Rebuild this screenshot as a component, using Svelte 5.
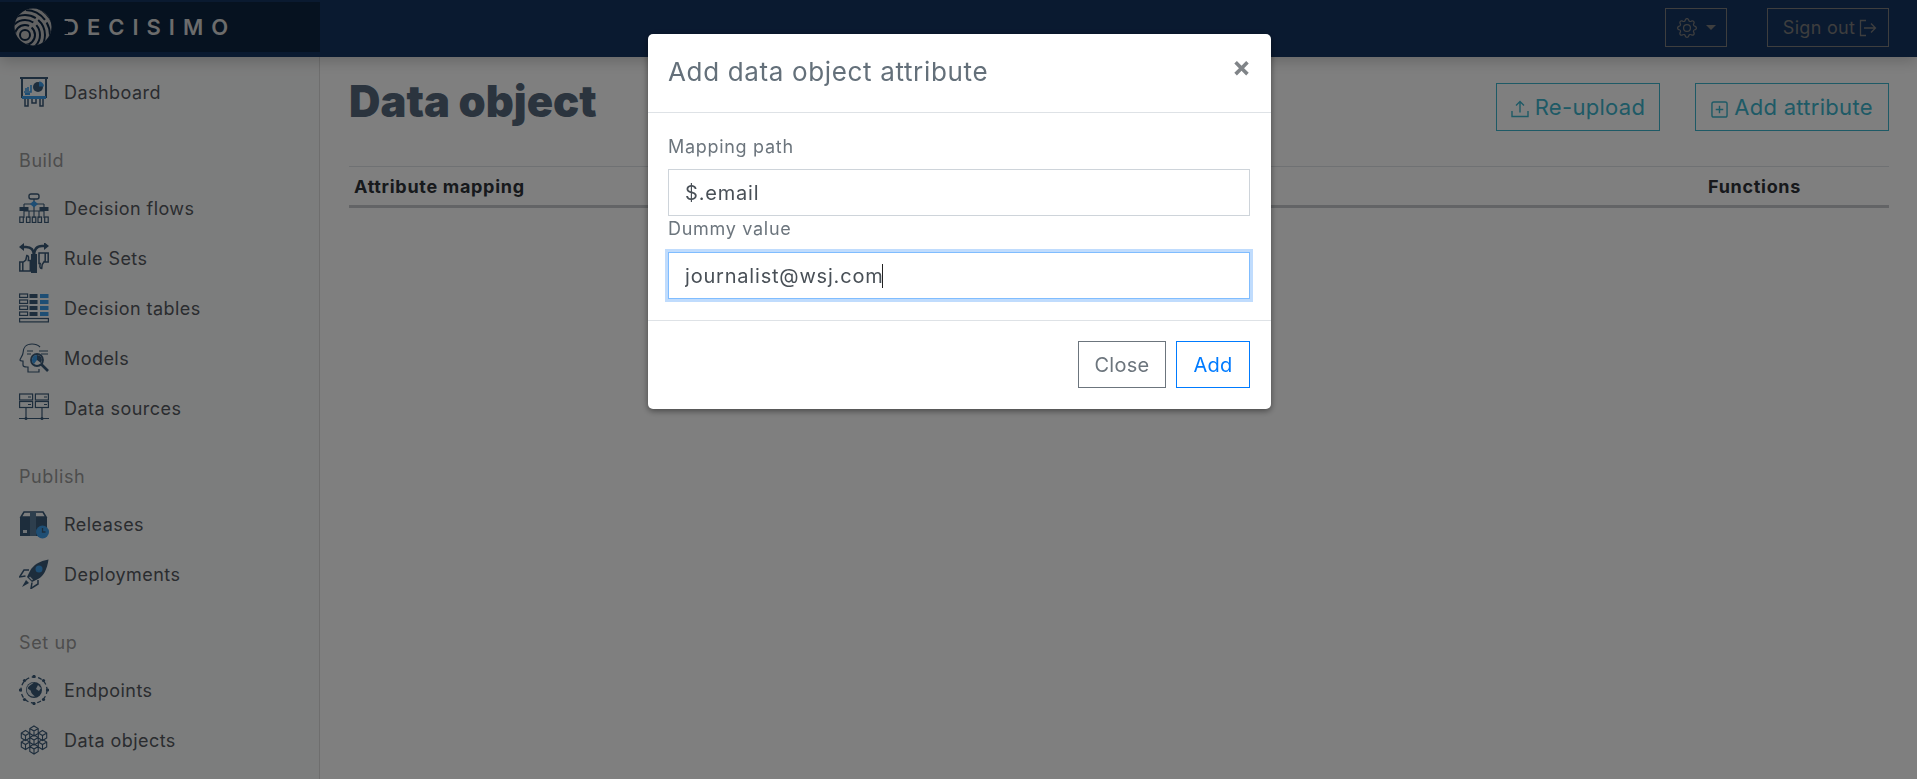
<script>
	const ink = "#3a5a78";
	const blue = "#3c9ce8";

	// one small isometric cube, used for the data objects cluster
	const cube = (x, y) =>
		`M${x} ${y - 5}l4.200 2.500v5l-4.200 2.500-4.200-2.500v-5zM${x - 4.200} ${y - 2.500}l4.200 2.500 4.200-2.500M${x} ${y}v5`;
	const cubes = [
		[15, 6],
		[15, 15],
		[15, 24],
		[6.500, 10.500],
		[23.500, 10.500],
		[6.500, 19.500],
		[23.500, 19.500],
	];

	const icons = {
		dashboard: `<path d="M1 1h28M3 2v18h24V2" fill="none" stroke="${ink}" stroke-width="2"/><path d="M5 15h7V8M7 14v-3M9 14v-4" fill="none" stroke="${blue}" stroke-width="1.600"/><circle cx="19" cy="10" r="5" fill="${ink}"/><path d="M20 4.500a5 5 0 0 1 5 5h-5z" fill="${blue}"/><path d="M6 17h5" stroke="${blue}" stroke-width="2"/><rect x="3" y="19" width="24" height="3" fill="${blue}"/><path d="M6 22v7h3v-7M13 22v4h4v-4M21 22v7h3v-7" fill="none" stroke="${ink}" stroke-width="1.500"/>`,
		flows: `<rect x="10" y="1" width="10" height="5" rx="2" fill="none" stroke="${ink}" stroke-width="1.400"/><path d="M15 6v19M5 11h20M5 11v14M25 11v14M10 18v7M20 18v7M5 18h20" fill="none" stroke="${ink}" stroke-width="1.100"/><path d="M15 7.500l4 3.500-4 3.500-4-3.500z" fill="${blue}"/><rect x="0.500" y="14" width="9" height="4" fill="${ink}"/><rect x="20.500" y="14" width="9" height="4" fill="${ink}"/><g fill="none" stroke="${ink}" stroke-width="1.200"><rect x="0.800" y="24" width="3.500" height="5.500"/><rect x="7.500" y="24" width="3.500" height="5.500"/><rect x="13.300" y="24" width="3.500" height="5.500"/><rect x="19" y="24" width="3.500" height="5.500"/><rect x="25.700" y="24" width="3.500" height="5.500"/></g>`,
		rules: `<path d="M3 4h4c5 0 8 3 8 9M27 3h-4c-5 0-8 3-8 10" fill="none" stroke="${ink}" stroke-width="2.400"/><path d="M5 0L0 4l5 4zM25 -1l5 4-5 4z" fill="${ink}"/><rect x="12" y="11" width="6" height="19" fill="${ink}"/><g fill="none" stroke="${ink}" stroke-width="1.500"><path d="M0.800 19h3v9h-3zM3.800 19.500l3-2.500 1-4.500c2 0 2 2 1.500 5h2v10.500H3.800"/><path d="M29.200 19h-3v-9h3zM26.200 18.500h-1l-2 3-.5 4c-2 0-2-2-1.500-5H20V10h6.200"/></g>`,
		tables: `<g fill="none" stroke="${ink}" stroke-width="1.200"><rect x="0.600" y="1" width="8" height="3.400"/><rect x="0.600" y="7" width="8" height="3.400"/><rect x="0.600" y="13" width="8" height="3.400"/><rect x="0.600" y="19" width="8" height="3.400"/><rect x="0.600" y="25.500" width="28.800" height="3.400"/></g><g fill="${ink}"><rect x="10.500" y="1" width="8" height="4"/><rect x="10.500" y="7" width="8" height="4"/><rect x="10.500" y="13" width="8" height="4"/><rect x="10.500" y="19" width="8" height="4"/></g><g fill="${blue}"><rect x="21" y="1" width="8.500" height="4"/><rect x="21" y="7" width="8.500" height="4"/><rect x="21" y="13" width="8.500" height="4"/><rect x="21" y="19" width="8.500" height="4"/></g>`,
		models: `<path d="M21 4C19 2 16 1 13 1 7 1 4 5 4 10c0 2-3 6-3 7s2 1 3 1v4c0 2 2 2 4 2h1v5h11v-3" fill="none" stroke="${ink}" stroke-width="1.200"/><path d="M8 8h6M8 11h4M20 8h9M22 11h7" stroke="${ink}" stroke-width="1.100"/><circle cx="18" cy="17" r="6" fill="none" stroke="${ink}" stroke-width="1.800"/><path d="M18 12a5 5 0 0 0-3 9l3-4z" fill="${blue}"/><path d="M18 12a5 5 0 0 1 4 8l-4-3z" fill="${ink}"/><path d="M22 21l7 7" stroke="${ink}" stroke-width="2.600"/>`,
		sources: `<g fill="none" stroke="${ink}" stroke-width="1.200"><rect x="0.600" y="1" width="13" height="6"/><rect x="0.600" y="8.500" width="13" height="6"/><rect x="16.400" y="1" width="13" height="6"/><rect x="16.400" y="8.500" width="13" height="6"/><path d="M7 15v10M23 15v10M0 25.500h30"/></g><g fill="${ink}"><path d="M9 3.500h3v1H9zM9 11h3v1H9zM25 3.500h3v1h-3zM25 11h3v1h-3z"/><circle cx="7" cy="25.500" r="1.500"/><circle cx="23" cy="25.500" r="1.500"/></g>`,
		releases: `<path d="M2 8l3-5h19l3 5z" fill="none" stroke="${ink}" stroke-width="1.600"/><rect x="1" y="8" width="27" height="19" fill="${ink}"/><path d="M11 3h6v24h-6z" fill="#5b7d9b"/><rect x="4" y="21" width="4" height="3" fill="#dfe6ec"/><circle cx="23.500" cy="23" r="6.500" fill="${blue}"/><path d="M23.500 19v4h3" fill="none" stroke="${ink}" stroke-width="1.300"/>`,
		deployments: `<path d="M29.500 0.500C21 2 14 6 11 12l-3 6 5 5 6-3c6-3 9-10 10.500-19.500z" fill="${ink}"/><circle cx="20" cy="10" r="3.500" fill="${blue}"/><path d="M10 11H5L0.500 18l6-1M19 21v4l-7 4.500 1-6" fill="none" stroke="${ink}" stroke-width="1.500"/><path d="M7 21l-4 7 7-4z" fill="${ink}"/><path d="M10.500 18l3 3" stroke="#dfe6ec" stroke-width="1.500"/>`,
		endpoints: `<circle cx="15" cy="15" r="13" fill="none" stroke="${ink}" stroke-width="1.300" stroke-dasharray="4 2.500"/><circle cx="15" cy="15" r="8" fill="${ink}"/><path d="M15 7.500c-2 2-5 3-6 5s3 2 3 4 2 3 4 5c-3 .5-7-1-8-5s1-8 7-9zM19 10l3 3-2 3-3-2z" fill="#dfe6ec"/><g fill="${ink}"><circle cx="15" cy="1.500" r="1.600"/><circle cx="15" cy="28.500" r="1.600"/><circle cx="1.500" cy="15" r="1.600"/><circle cx="28.500" cy="15" r="1.600"/><circle cx="5.500" cy="5.500" r="1.600"/><circle cx="24.500" cy="5.500" r="1.600"/><circle cx="5.500" cy="24.500" r="1.600"/><circle cx="24.500" cy="24.500" r="1.600"/></g>`,
		objects: `<path d="${cubes.map(([x, y]) => cube(x, y)).join("")}" fill="none" stroke="${ink}" stroke-width="1.100"/>`,
	};

	const groups = [
		{ title: null, items: [{ label: "Dashboard", icon: "dashboard" }] },
		{
			title: "Build",
			items: [
				{ label: "Decision flows", icon: "flows" },
				{ label: "Rule Sets", icon: "rules" },
				{ label: "Decision tables", icon: "tables" },
				{ label: "Models", icon: "models" },
				{ label: "Data sources", icon: "sources" },
			],
		},
		{
			title: "Publish",
			items: [
				{ label: "Releases", icon: "releases" },
				{ label: "Deployments", icon: "deployments" },
			],
		},
		{
			title: "Set up",
			items: [
				{ label: "Endpoints", icon: "endpoints" },
				{ label: "Data objects", icon: "objects" },
			],
		},
	];
</script>

<div class="page">
	<header class="topbar">
		<div class="brand">
			<svg class="globe" viewBox="0 0 38 38">
				<clipPath id="ball"><circle cx="19" cy="19" r="18.500" /></clipPath>
				<circle cx="19" cy="19" r="18.500" fill="#c4c4c4" />
				<g clip-path="url(#ball)" fill="none" stroke="#0c2440" stroke-width="2">
					<circle cx="11" cy="27" r="5" />
					<circle cx="11" cy="27" r="10" stroke-dasharray="24 3" />
					<circle cx="11" cy="27" r="15" stroke-dasharray="30 4 12 3" />
					<circle cx="11" cy="27" r="20" stroke-dasharray="40 3 18 4" />
					<circle cx="11" cy="27" r="25" stroke-dasharray="22 3 30 4" />
					<circle cx="11" cy="27" r="30" />
				</g>
			</svg>
			<span class="wordmark">DECISIMO</span>
		</div>
		<div class="topactions">
			<button class="ghost gear" aria-label="Settings">
				<svg viewBox="0 0 16 16" width="20" height="20" fill="currentColor">
					<path d="M8 4.754a3.246 3.246 0 1 0 0 6.492 3.246 3.246 0 0 0 0-6.492zM5.754 8a2.246 2.246 0 1 1 4.492 0 2.246 2.246 0 0 1-4.492 0z" />
					<path d="M9.796 1.343c-.527-1.79-3.065-1.79-3.592 0l-.094.319a.873.873 0 0 1-1.255.52l-.292-.16c-1.64-.892-3.433.902-2.54 2.541l.159.292a.873.873 0 0 1-.52 1.255l-.319.094c-1.79.527-1.79 3.065 0 3.592l.319.094a.873.873 0 0 1 .52 1.255l-.16.292c-.892 1.64.901 3.434 2.541 2.54l.292-.159a.873.873 0 0 1 1.255.52l.094.319c.527 1.79 3.065 1.79 3.592 0l.094-.319a.873.873 0 0 1 1.255-.52l.292.16c1.64.893 3.434-.902 2.54-2.541l-.159-.292a.873.873 0 0 1 .52-1.255l.319-.094c1.79-.527 1.79-3.065 0-3.592l-.319-.094a.873.873 0 0 1-.52-1.255l.16-.292c.893-1.64-.902-3.433-2.541-2.54l-.292.159a.873.873 0 0 1-1.255-.52l-.094-.319zm-2.633.283c.246-.835 1.428-.835 1.674 0l.094.319a1.873 1.873 0 0 0 2.693 1.115l.291-.16c.764-.415 1.6.42 1.184 1.185l-.159.292a1.873 1.873 0 0 0 1.116 2.692l.318.094c.835.246.835 1.428 0 1.674l-.319.094a1.873 1.873 0 0 0-1.115 2.693l.16.291c.415.764-.42 1.6-1.185 1.184l-.291-.159a1.873 1.873 0 0 0-2.693 1.116l-.094.318c-.246.835-1.428.835-1.674 0l-.094-.319a1.873 1.873 0 0 0-2.692-1.115l-.292.16c-.764.415-1.6-.42-1.184-1.185l.159-.291A1.873 1.873 0 0 0 1.945 8.93l-.319-.094c-.835-.246-.835-1.428 0-1.674l.319-.094A1.873 1.873 0 0 0 3.06 4.377l-.16-.292c-.415-.764.42-1.6 1.185-1.184l.292.159a1.873 1.873 0 0 0 2.692-1.115l.094-.319z" />
				</svg>
				<span class="caret-down"></span>
			</button>
			<button class="ghost signout">
				Sign out
				<svg viewBox="0 0 18 18" width="18" height="18" fill="none" stroke="currentColor" stroke-width="1.300">
					<path d="M7 1.500H1.500v15H7M5 9h11.500M12 4.500L16.500 9 12 13.500" />
				</svg>
			</button>
		</div>
	</header>

	<div class="body">
		<nav class="sidebar">
			{#each groups as group}
				<div class="group">
					{#if group.title}
						<h6>{group.title}</h6>
					{/if}
					{#each group.items as item}
						<div class="item">
							<svg viewBox="0 0 30 30" width="30" height="30">{@html icons[item.icon]}</svg>
							<span>{item.label}</span>
						</div>
					{/each}
				</div>
			{/each}
		</nav>

		<main class="content">
			<div class="head">
				<h1>Data object</h1>
				<div class="actions">
					<button class="outline upload">
						<svg viewBox="0 0 18 18" width="18" height="18" fill="none" stroke="currentColor" stroke-width="1.400">
							<path d="M1 11v5.500h16V11M9 12.500V2M5 5.500L9 1.500l4 4" />
						</svg>
						Re-upload
					</button>
					<button class="outline add">
						<svg viewBox="0 0 18 18" width="17" height="17" fill="none" stroke="currentColor" stroke-width="1.500">
							<rect x="1" y="1" width="16" height="16" rx="2" />
							<path d="M9 5v8M5 9h8" />
						</svg>
						Add attribute
					</button>
				</div>
			</div>
			<div class="table-head">
				<span>Attribute mapping</span>
				<span class="functions">Functions</span>
			</div>
		</main>
	</div>
</div>

<div class="backdrop">
	<div class="modal">
		<div class="modal-head">
			<h5>Add data object attribute</h5>
			<span class="close">×</span>
		</div>
		<div class="modal-body">
			<label for="path">Mapping path</label>
			<input id="path" value="$.email" />
			<label for="dummy">Dummy value</label>
			<div class="focused">
				<input id="dummy" value="journalist@wsj.com" />
				<i class="text-caret"></i>
			</div>
		</div>
		<div class="modal-foot">
			<button class="btn-close">Close</button>
			<button class="btn-add">Add</button>
		</div>
	</div>
</div>

<style>
	:global(body) {
		font-family: Inter, "Open Sans", sans-serif;
		background: #fff;
		overflow: hidden;
	}

	button {
		font: inherit;
		background: none;
		cursor: pointer;
	}

	.page {
		height: 779px;
		display: flex;
		flex-direction: column;
	}

	.topbar {
		height: 57px;
		flex: none;
		display: flex;
		justify-content: space-between;
		background: #153461;
		box-shadow: 0 4px 14px rgba(0, 0, 0, 0.2);
		position: relative;
	}

	.brand {
		width: 320px;
		margin: 2px 0 5px;
		background: #0c2440;
		display: flex;
		align-items: center;
		padding-left: 14px;
		box-sizing: border-box;
	}

	.globe {
		width: 38px;
		height: 38px;
	}

	.wordmark {
		margin-left: 11px;
		position: relative;
		font-size: 22px;
		font-weight: 600;
		letter-spacing: 8px;
		color: #d8d8d8;
	}

	/* the logo's D has no stem */
	.wordmark::before {
		content: "";
		position: absolute;
		left: 0;
		top: 7px;
		width: 5px;
		height: 13px;
		background: #0c2440;
	}

	.topactions {
		display: flex;
		gap: 40px;
		padding: 8px 28px 0 0;
	}

	.ghost {
		height: 39px;
		border: 1px solid #7c7c7c;
		color: #7c7c7c;
		font-size: 18px;
		display: flex;
		align-items: center;
		box-sizing: border-box;
	}

	.gear {
		width: 62px;
		justify-content: center;
		gap: 9px;
	}

	.caret-down {
		border: 5px solid transparent;
		border-top-color: #7c7c7c;
		border-bottom: 0;
	}

	.signout {
		width: 122px;
		justify-content: center;
		gap: 4px;
		padding: 0 0 0 4px;
		letter-spacing: 0.3px;
	}

	.body {
		flex: 1;
		display: flex;
	}

	.sidebar {
		width: 320px;
		flex: none;
		box-sizing: border-box;
		background: #f9fafa;
		border-right: 1px solid #ddd;
		padding: 10px 0 0 19px;
	}

	.group + .group {
		margin-top: 32px;
	}

	h6 {
		margin: 0 0 10px;
		font-size: 18px;
		font-weight: 400;
		line-height: 24px;
		letter-spacing: 0.6px;
		color: #9a9a9a;
	}

	.item {
		height: 50px;
		display: flex;
		align-items: center;
		gap: 15px;
		font-size: 18px;
		letter-spacing: 0.45px;
		color: #55595f;
	}

	.content {
		flex: 1;
		padding: 0 28px 0 29px;
	}

	.head {
		display: flex;
		justify-content: space-between;
		height: 109px;
	}

	h1 {
		margin: 20px 0 0;
		font-size: 43.500px;
		line-height: 48px;
		font-weight: 900;
		color: #56697c;
	}

	.actions {
		display: flex;
		gap: 35px;
		padding-top: 26px;
	}

	.outline {
		height: 48px;
		border: 1px solid #3cb4cc;
		color: #3cb4cc;
		font-size: 22px;
		letter-spacing: 0.3px;
		display: flex;
		align-items: center;
		justify-content: center;
		gap: 6px;
		padding: 0;
		box-sizing: border-box;
	}

	.outline svg {
		margin-top: 4px;
	}

	.upload {
		width: 164px;
	}

	.add {
		width: 194px;
	}

	.table-head {
		height: 42px;
		border-top: 1px solid #dee2e6;
		border-bottom: 3px solid #c6c9cc;
		display: flex;
		justify-content: space-between;
		align-items: center;
		padding: 0 5px;
		font-weight: 700;
		font-size: 18px;
		letter-spacing: 0.7px;
		color: #2e3338;
		box-sizing: border-box;
	}

	.functions {
		width: 176px;
	}

	.backdrop {
		position: fixed;
		inset: 0;
		background: rgba(0, 0, 0, 0.5);
		display: flex;
		justify-content: center;
		padding-left: 2px;
	}

	.modal {
		width: 623px;
		height: 375px;
		margin-top: 34px;
		background: #fff;
		border-radius: 5px;
		box-shadow: 0 2px 6px rgba(0, 0, 0, 0.45);
		display: flex;
		flex-direction: column;
		color: #6c757d;
	}

	.modal-head {
		height: 79px;
		flex: none;
		border-bottom: 1px solid #dee2e6;
		display: flex;
		justify-content: space-between;
		padding: 0 20px;
		box-sizing: border-box;
	}

	h5 {
		margin: 22px 0 0;
		font-size: 26px;
		line-height: 32px;
		letter-spacing: 0.65px;
		font-weight: 400;
		color: #64707a;
	}

	.close {
		font-size: 28px;
		font-weight: 700;
		color: #808488;
		line-height: 28px;
		margin-top: 19px;
	}

	.modal-body {
		flex: 1;
		padding: 22px 21px 0 20px;
		border-bottom: 1px solid #dee2e6;
	}

	label {
		display: block;
		font-size: 18px;
		line-height: 24px;
		letter-spacing: 0.7px;
		margin-bottom: 10px;
	}

	label[for="dummy"] {
		margin: 1px 0 11px;
	}

	input {
		width: 100%;
		height: 47px;
		box-sizing: border-box;
		border: 1px solid #ced4da;
		padding: 0 16px;
		font: inherit;
		font-size: 20px;
		letter-spacing: 0.8px;
		color: #495057;
		display: block;
		outline: none;
		caret-color: transparent;
	}

	.focused {
		position: relative;
	}

	.focused input {
		border-color: #80bdff;
		box-shadow: 0 0 0 3px #c0dcfd;
	}

	.text-caret {
		position: absolute;
		left: 214px;
		top: 12px;
		width: 1px;
		height: 24px;
		background: #222;
	}

	.modal-foot {
		height: 88px;
		flex: none;
		display: flex;
		justify-content: flex-end;
		gap: 10px;
		padding: 20px 21px 0 20px;
		box-sizing: border-box;
	}

	.modal-foot button {
		height: 47px;
		font-size: 20px;
		letter-spacing: 0.3px;
		box-sizing: border-box;
		padding: 0;
	}

	.btn-close {
		width: 88px;
		border: 1px solid #6c757d;
		color: #6c757d;
	}

	.btn-add {
		width: 74px;
		border: 1px solid #007bff;
		color: #007bff;
	}
</style>
